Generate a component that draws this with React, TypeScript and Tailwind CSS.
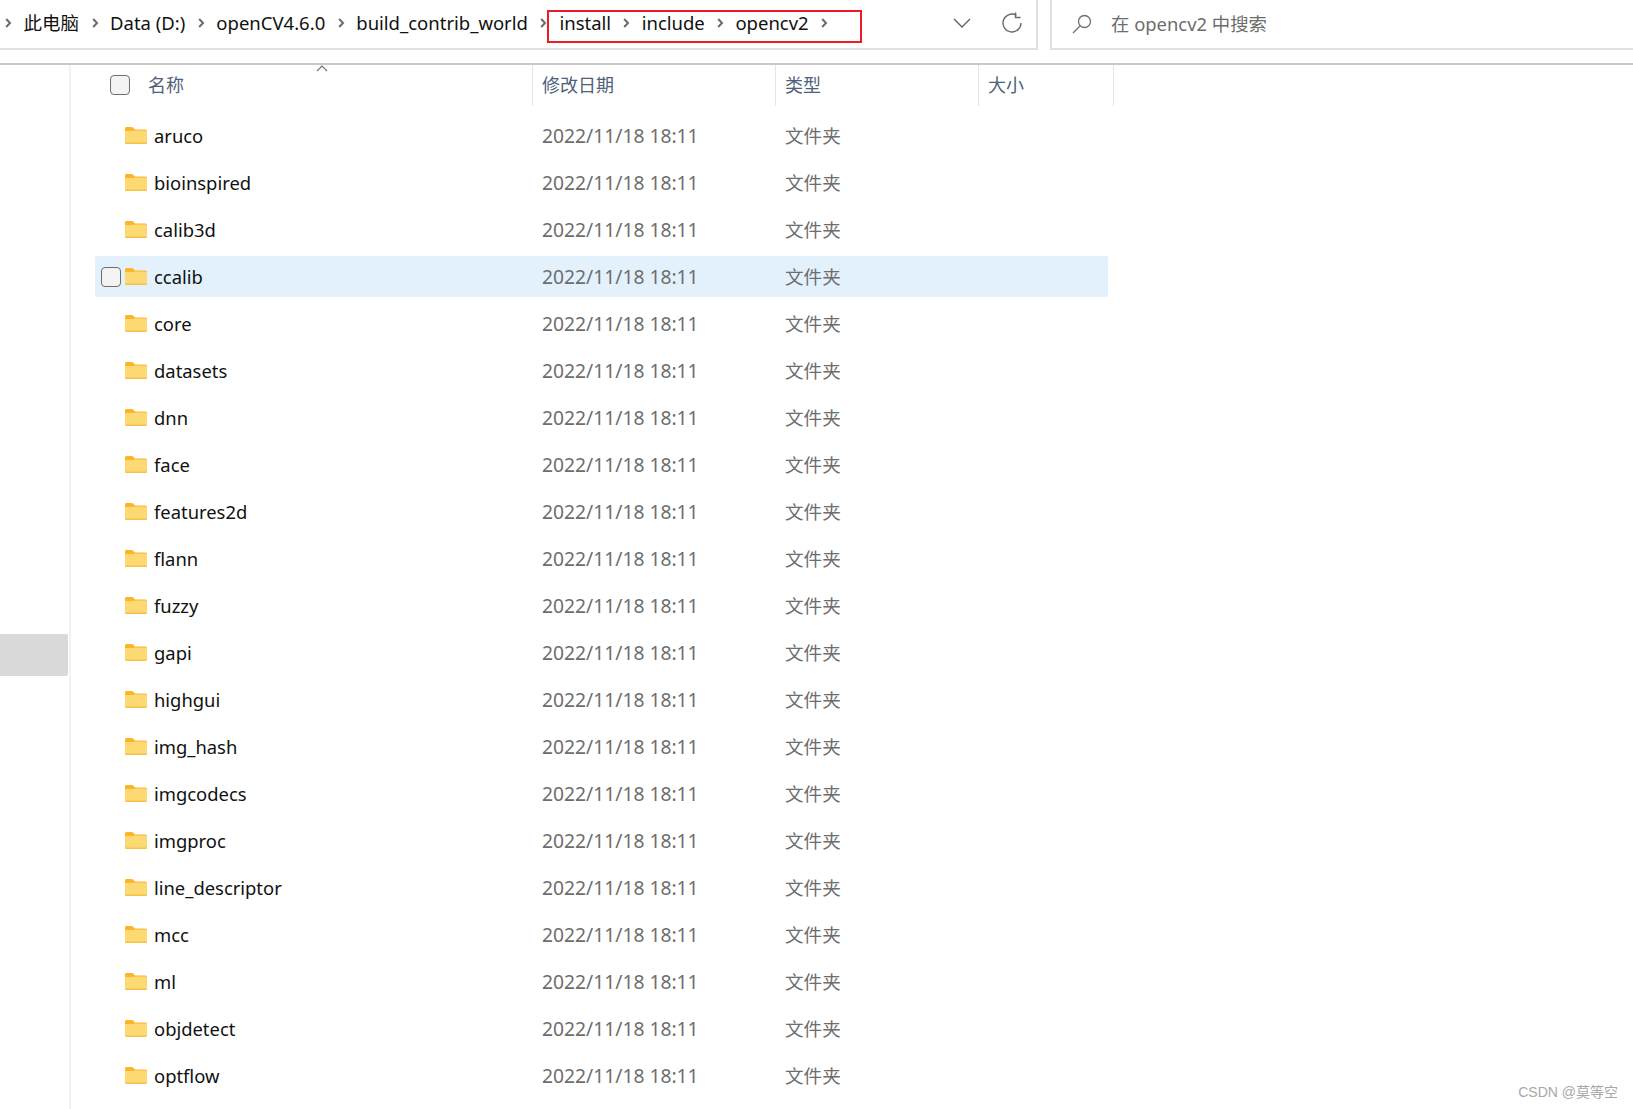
const folders = [
  "aruco",
  "bioinspired",
  "calib3d",
  "ccalib",
  "core",
  "datasets",
  "dnn",
  "face",
  "features2d",
  "flann",
  "fuzzy",
  "gapi",
  "highgui",
  "img_hash",
  "imgcodecs",
  "imgproc",
  "line_descriptor",
  "mcc",
  "ml",
  "objdetect",
  "optflow",
]

const fontStack = "font-['Noto_Sans','Noto_Sans_CJK_SC',sans-serif]"

function Chevron() {
  return (
    <svg width="8" height="12" viewBox="0 0 8 12" className="shrink-0">
      <path d="M2.2 2 L6 6 L2.2 10" fill="none" stroke="#6b6b6b" strokeWidth="2" />
    </svg>
  )
}

function Crumb({ label }: { label: string }) {
  return (
    <>
      <span className="whitespace-nowrap">{label}</span>
      <Chevron />
    </>
  )
}

function FolderIcon() {
  return (
    <svg width="22" height="17" viewBox="0 0 22 17" className="shrink-0">
      <path d="M0 1.5 Q0 0 1.5 0 H7 Q8 0 9 1.5 L10 2.5 H20.5 Q22 2.5 22 4 V8 H0 Z" fill="#fbb526" />
      <path d="M0 4 H8 L10 3.5 H20.5 Q22 3.5 22 5 V15.5 Q22 17 20.5 17 H1.5 Q0 17 0 15.5 Z" fill="#fdd974" />
      <path d="M0 15.4 H22 V15.5 Q22 17 20.5 17 H1.5 Q0 17 0 15.5 Z" fill="#f7c24a" />
    </svg>
  )
}

function Checkbox() {
  return <span className="block w-5 h-5 shrink-0 rounded-[4px] border-[1.5px] border-[#6e6e6e] bg-[#f3f3f3]" />
}

function Toolbar() {
  return (
    <div className="flex h-[50px] text-[18.5px] text-[#111]">
      <div className="flex w-[1038px] items-center border-r-2 border-b-2 border-[#e0e0e0] pb-[2px] pl-1">
        <div className="flex items-center gap-[11.5px]">
          <Chevron />
          <span className="whitespace-nowrap">此电脑</span>
          <Chevron />
          <Crumb label="Data (D:)" />
          <Crumb label="openCV4.6.0" />
          <Crumb label="build_contrib_world" />
        </div>
        <div className="mt-[6px] flex h-[33px] w-[315px] items-center gap-[11.3px] border-2 border-[#ed1c24] pb-[6px] pl-[10px]">
          <Crumb label="install" />
          <Crumb label="include" />
          <Crumb label="opencv2" />
        </div>
        <svg width="18" height="10" viewBox="0 0 18 10" className="ml-[91px]">
          <path d="M1 1 L9 9 L17 1" fill="none" stroke="#5f5f5f" strokeWidth="1.3" />
        </svg>
        <svg width="22" height="22" viewBox="0 0 22 22" className="ml-[30px]">
          <path d="M15.5 3.2 A9 9 0 1 0 20 11" fill="none" stroke="#6a6a6a" strokeWidth="1.4" />
          <path d="M14.5 0.5 V5.5 H19.5" fill="none" stroke="#6a6a6a" strokeWidth="1.4" />
        </svg>
      </div>
      <div className="ml-3 flex flex-1 items-center border-l-2 border-b-2 border-[#e0e0e0] pl-5 text-[18.4px] text-[#6d6d6d]">
        <svg width="20" height="20" viewBox="0 0 20 20">
          <circle cx="12.5" cy="7.5" r="6" fill="none" stroke="#6f6f6f" strokeWidth="1.3" />
          <path d="M8 12 L1 19" stroke="#6f6f6f" strokeWidth="1.3" />
        </svg>
        <span className="ml-[19px] whitespace-nowrap">在 opencv2 中搜索</span>
      </div>
    </div>
  )
}

function HeaderRow() {
  return (
    <div className="relative flex h-[41px] items-center text-[18px] text-[#4e617a]">
      <div className="flex h-full w-[462px] items-center border-r border-[#e5e5e5] pb-[2px] pl-[39px]">
        <Checkbox />
        <span className="ml-[18px] pt-[2px]">名称</span>
      </div>
      <div className="flex h-full w-[243px] items-center border-r border-[#e5e5e5] pl-[9px]">修改日期</div>
      <div className="flex h-full w-[203px] items-center border-r border-[#e5e5e5] pl-[9px]">类型</div>
      <div className="flex h-full w-[135px] items-center border-r border-[#e5e5e5] pl-[9px]">大小</div>
      <svg width="12" height="7" viewBox="0 0 12 7" className="absolute left-[245px] top-0">
        <path d="M1 6 L6 1 L11 6" fill="none" stroke="#707070" strokeWidth="1.1" />
      </svg>
    </div>
  )
}

function FileRow({ name, hovered }: { name: string; hovered: boolean }) {
  return (
    <div className="flex h-[47px] items-center">
      <div className={`ml-[24px] flex h-[41px] w-[1013px] items-center rounded-[2px] ${hovered ? "bg-[#e3f1fd]" : ""}`}>
        <div className="flex w-[30px] justify-end pr-[4px]">{hovered && <Checkbox />}</div>
        <FolderIcon />
        <span className="ml-[7px] w-[388px] text-[18.4px] text-[#111]">{name}</span>
        <span className="mt-[2px] w-[243px] text-[19.25px] text-[#6d6d6d]">2022/11/18 18:11</span>
        <span className="text-[18.6px] text-[#6d6d6d]">文件夹</span>
      </div>
    </div>
  )
}

export default function App() {
  return (
    <div className={`relative h-[1109px] w-[1633px] overflow-hidden bg-white ${fontStack}`}>
      <Toolbar />
      <div className="mt-[13px] flex border-t-2 border-[#c9c9c9]">
        {/* left nav pane, scrolled out of view except for the selected item */}
        <div className="h-[1046px] w-[71px] shrink-0 border-r-2 border-[#f3f3f3] pt-[569px]">
          <div className="h-[42px] w-[68px] rounded-r-[2px] bg-[#d9d9d9]" />
        </div>
        <div className="flex-1">
          <HeaderRow />
          <div className="pt-[6px]">
            {folders.map(name => (
              <FileRow key={name} name={name} hovered={name === "ccalib"} />
            ))}
          </div>
        </div>
      </div>
      <div className="absolute bottom-[6px] right-[15px] font-['Liberation_Sans','Noto_Sans_CJK_SC',sans-serif] text-[14px] text-[#a8a8a8]">CSDN @莫等空</div>
    </div>
  )
}
